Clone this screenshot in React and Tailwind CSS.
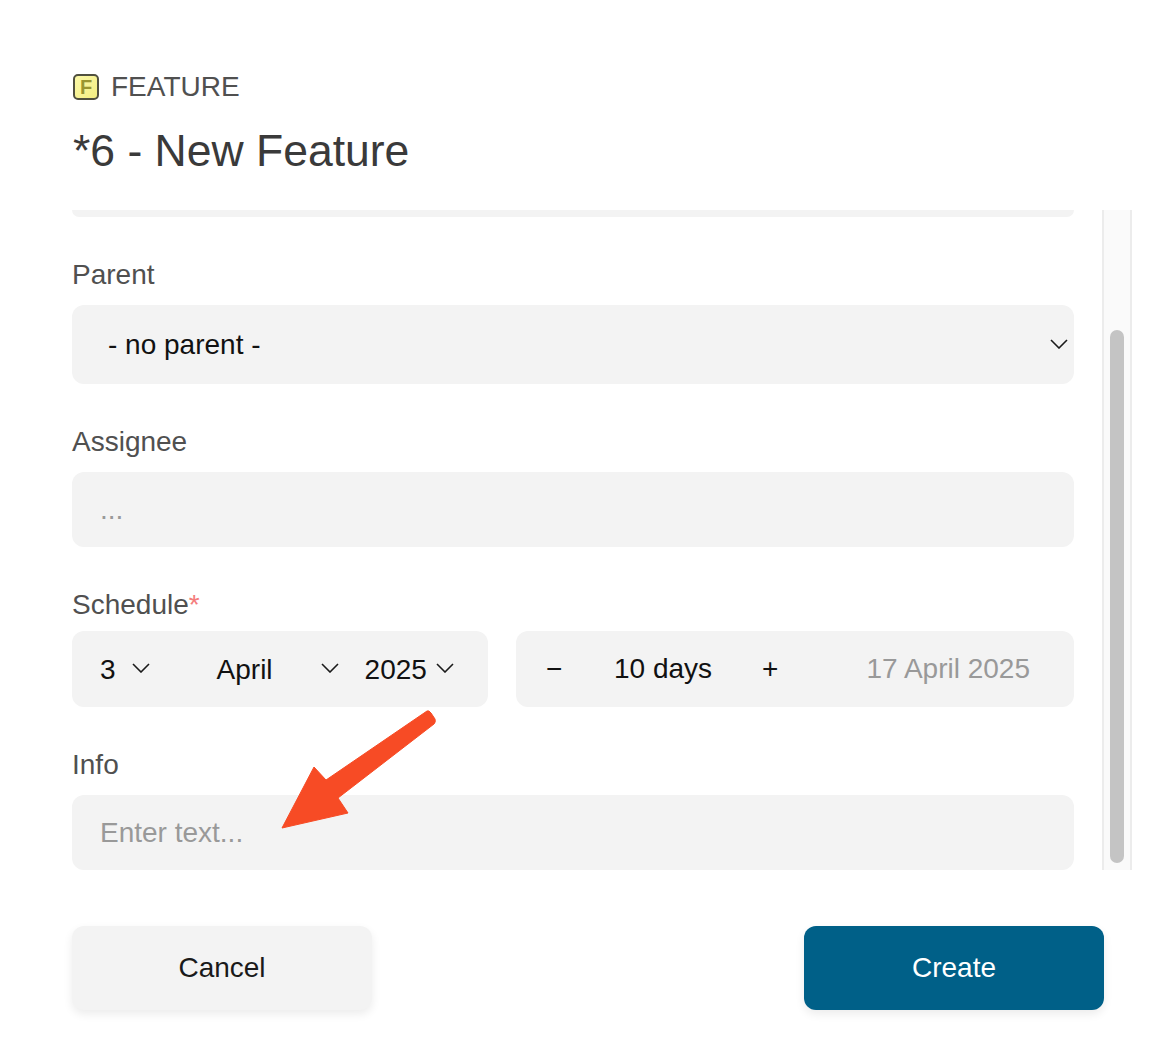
import React from 'react';

const Chevron = ({ className = '' }) => (
    <svg viewBox="0 0 18 10" className={`w-[18px] h-[10px] ${className}`} fill="none" stroke="#1a1a1a" strokeWidth="1.6">
        <path d="M1 1l8 8 8-8" />
    </svg>
);

const FeatureIcon = () => (
    <div className="w-[26px] h-[26px] rounded-[5px] border-2 border-[#50503f] bg-gradient-to-br from-[#fbf8a8] to-[#f3ee80] flex items-center justify-center">
        <span className="text-[20px] leading-none font-bold text-[#9a9530] -mt-[1px]">F</span>
    </div>
);

const Label = ({ children }) => (
    <div className="text-[28px] leading-[32px] text-[#505050]">{children}</div>
);

export default function App() {
    return (
        <div className="relative h-[1054px] bg-white pt-[70px] font-['Liberation_Sans',Arial,sans-serif]">
            <div className="pl-[73px] flex items-center gap-[12px] h-[34px]">
                <FeatureIcon />
                <span className="text-[28px] leading-[34px] text-[#505050]">FEATURE</span>
            </div>
            <h1 className="pl-[73px] mt-[21px] text-[44.5px] leading-[52px] text-[#3a3a3a]">*6 - New Feature</h1>

            <div className="mt-[33px] ml-[72px] w-[1060px] h-[660px] flex">
                <div className="w-[1002px] shrink-0">
                    <div className="h-[7px] bg-[#f3f3f3] rounded-b-[12px]" />
                    <div className="mt-[42px]"><Label>Parent</Label></div>
                    <div className="mt-[14px] h-[79px] bg-[#f3f3f3] rounded-[12px] pl-[36px] pr-[6px] flex items-center justify-between">
                        <span className="text-[28px] text-[#111]">- no parent -</span>
                        <Chevron className="-mt-[2px]" />
                    </div>
                    <div className="mt-[42px]"><Label>Assignee</Label></div>
                    <div className="mt-[14px] h-[75px] bg-[#f3f3f3] rounded-[12px] pl-[28px] flex items-center">
                        <span className="text-[28px] text-[#999]">...</span>
                    </div>
                    <div className="mt-[42px]"><Label>Schedule<span className="text-[#f47c7c]">*</span></Label></div>
                    <div className="mt-[10px] flex gap-[28px]">
                        <div className="w-[416px] h-[76px] bg-[#f3f3f3] rounded-[12px] flex items-center text-[28px] text-[#111]">
                            <span className="ml-[28px] mt-[1px]">3</span>
                            <Chevron className="ml-[16px] -mt-[2px]" />
                            <span className="ml-[67px] mt-[1px]">April</span>
                            <Chevron className="ml-[48px] -mt-[2px]" />
                            <span className="ml-[26px] mt-[1px]">2025</span>
                            <Chevron className="ml-[9px] -mt-[2px]" />
                        </div>
                        <div className="flex-1 h-[76px] bg-[#f3f3f3] rounded-[12px] flex items-center text-[28px]">
                            <span className="ml-[30px] w-[16px] text-[#111]">−</span>
                            <span className="ml-[52px] text-[#111]">10 days</span>
                            <span className="ml-[50px] text-[#111]">+</span>
                            <span className="ml-auto mr-[44px] text-[#999]">17 April 2025</span>
                        </div>
                    </div>
                    <div className="mt-[42px]"><Label>Info</Label></div>
                    <div className="mt-[14px] h-[75px] bg-[#f3f3f3] rounded-[12px] pl-[28px] flex items-center">
                        <span className="text-[28px] text-[#999]">Enter text...</span>
                    </div>
                </div>
                <div className="ml-[28px] w-[30px] h-full bg-[#fafafa] border-x-2 border-[#ececec] pt-[120px] pb-[7px] px-[6px] flex flex-col">
                    <div className="flex-1 rounded-full bg-[#c4c4c4]" />
                </div>
            </div>

            <div className="mt-[56px] mx-[72px] flex justify-between">
                <button className="w-[300px] h-[84px] rounded-[12px] bg-[#f3f3f3] text-[28px] text-[#1a1a1a] shadow-[0_4px_10px_rgba(0,0,0,0.08)]">Cancel</button>
                <button className="w-[300px] h-[84px] rounded-[12px] bg-[#006088] text-[28px] text-white shadow-[0_4px_10px_rgba(0,0,0,0.08)]">Create</button>
            </div>

            {/* annotation arrow over the form */}
            <svg className="absolute left-[270px] top-[700px]" width="180" height="140" viewBox="270 700 180 140">
                <path d="M427 711Q429 710 431 713L435 719Q436 722 434 724L338 798L348 813L282 828L314 767L326 780Z" fill="#f74b25" stroke="#f74b25" strokeWidth="1" strokeLinejoin="round" />
            </svg>
        </div>
    );
}
